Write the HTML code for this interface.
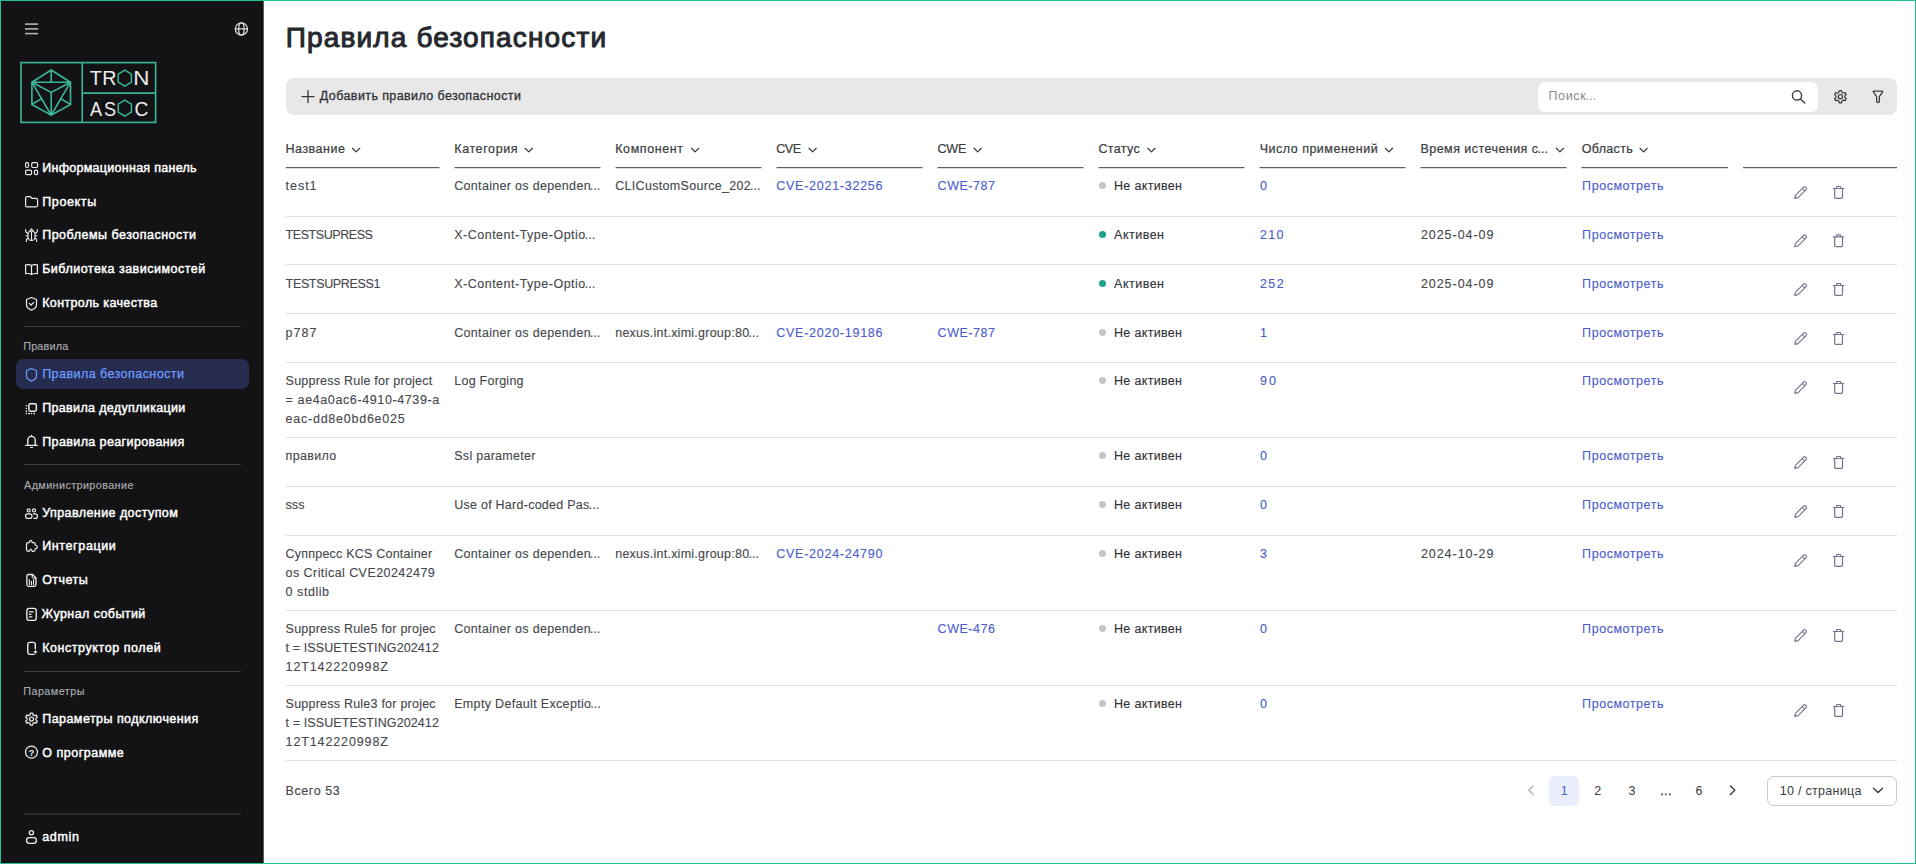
<!DOCTYPE html>
<html lang="ru"><head><meta charset="utf-8"><title>Правила безопасности</title>
<style>
html,body{margin:0;padding:0}
body{width:1916px;height:864px;position:relative;overflow:hidden;background:#fff;font-family:"Liberation Sans", sans-serif;}
.b{position:absolute}
.t{position:absolute;white-space:pre;line-height:40px;margin:0;padding:0}
#ov{position:absolute;left:0;top:0;width:1916px;height:864px;pointer-events:none}
#frame{position:absolute;left:0;top:0;width:1914px;height:862px;border:1px solid #1fc09a;pointer-events:none}
</style></head><body>
<div class="b" style="left:0;top:0;width:264px;height:864px;background:#131315"></div>
<div class="b" style="left:263px;top:1px;width:1px;height:862px;background:#5c5c5e"></div>
<div class="b" style="left:24px;top:326px;width:217px;height:1px;background:#3b3b3e"></div>
<div class="b" style="left:24px;top:464px;width:217px;height:1px;background:#3b3b3e"></div>
<div class="b" style="left:24px;top:671px;width:217px;height:1px;background:#3b3b3e"></div>
<div class="b" style="left:24px;top:813px;width:217px;height:2px;background:#2b2b2e"></div>
<div class="b" style="left:16px;top:359px;width:233px;height:30px;border-radius:7px;background:#262c4f"></div>
<div class="b" style="left:286px;top:78px;width:1611px;height:37px;border-radius:8px;background:#e8e8e8"></div>
<div class="b" style="left:1538px;top:82px;width:280px;height:30px;border-radius:7px;background:#fff"></div>
<div class="b" style="left:286px;top:216px;width:1611px;height:1px;background:#e0e0e1"></div>
<div class="b" style="left:286px;top:264px;width:1611px;height:1px;background:#e0e0e1"></div>
<div class="b" style="left:286px;top:313px;width:1611px;height:1px;background:#e0e0e1"></div>
<div class="b" style="left:286px;top:362px;width:1611px;height:1px;background:#e0e0e1"></div>
<div class="b" style="left:286px;top:437px;width:1611px;height:1px;background:#e0e0e1"></div>
<div class="b" style="left:286px;top:486px;width:1611px;height:1px;background:#e0e0e1"></div>
<div class="b" style="left:286px;top:535px;width:1611px;height:1px;background:#e0e0e1"></div>
<div class="b" style="left:286px;top:610px;width:1611px;height:1px;background:#e0e0e1"></div>
<div class="b" style="left:286px;top:685px;width:1611px;height:1px;background:#e0e0e1"></div>
<div class="b" style="left:286px;top:760px;width:1611px;height:1px;background:#e0e0e1"></div>
<div class="b" style="left:1098.9px;top:182.3px;width:7px;height:7px;border-radius:50%;background:#c4c5c8"></div>
<div class="b" style="left:1098.9px;top:231.3px;width:7px;height:7px;border-radius:50%;background:#1fa386"></div>
<div class="b" style="left:1098.9px;top:280.0px;width:7px;height:7px;border-radius:50%;background:#1fa386"></div>
<div class="b" style="left:1098.9px;top:329.0px;width:7px;height:7px;border-radius:50%;background:#c4c5c8"></div>
<div class="b" style="left:1098.9px;top:377.3px;width:7px;height:7px;border-radius:50%;background:#c4c5c8"></div>
<div class="b" style="left:1098.9px;top:452.3px;width:7px;height:7px;border-radius:50%;background:#c4c5c8"></div>
<div class="b" style="left:1098.9px;top:501.3px;width:7px;height:7px;border-radius:50%;background:#c4c5c8"></div>
<div class="b" style="left:1098.9px;top:550.3px;width:7px;height:7px;border-radius:50%;background:#c4c5c8"></div>
<div class="b" style="left:1098.9px;top:625.3px;width:7px;height:7px;border-radius:50%;background:#c4c5c8"></div>
<div class="b" style="left:1098.9px;top:700.3px;width:7px;height:7px;border-radius:50%;background:#c4c5c8"></div>
<div class="b" style="left:1549px;top:776px;width:30px;height:30px;border-radius:6px;background:#e9eefc"></div>
<div class="b" style="left:1767px;top:776px;width:130px;height:30px;border-radius:7px;border:1px solid #c9cacc;box-sizing:border-box;background:#fff"></div>
<aside>
<span class="t" style="left:42.20px;top:148px;font-size:12.5px;color:#ffffff;-webkit-text-stroke:0.45px #ffffff;letter-spacing:0.285px;">Информационная панель</span>
<span class="t" style="left:42.20px;top:182px;font-size:12.5px;color:#ffffff;-webkit-text-stroke:0.45px #ffffff;letter-spacing:0.647px;">Проекты</span>
<span class="t" style="left:42.20px;top:215px;font-size:12.5px;color:#ffffff;-webkit-text-stroke:0.45px #ffffff;letter-spacing:0.497px;">Проблемы безопасности</span>
<span class="t" style="left:42.20px;top:249px;font-size:12.5px;color:#ffffff;-webkit-text-stroke:0.45px #ffffff;letter-spacing:0.484px;">Библиотека зависимостей</span>
<span class="t" style="left:42.20px;top:283px;font-size:12.5px;color:#ffffff;-webkit-text-stroke:0.45px #ffffff;letter-spacing:0.368px;">Контроль качества</span>
<span class="t" style="left:23.20px;top:326px;font-size:10.8px;color:#abacaf;-webkit-text-stroke:0.15px #abacaf;letter-spacing:0.197px;">Правила</span>
<span class="t" style="left:42.20px;top:354px;font-size:12.5px;color:#6f9dff;-webkit-text-stroke:0.25px #6f9dff;letter-spacing:0.447px;">Правила безопасности</span>
<span class="t" style="left:42.20px;top:388px;font-size:12.5px;color:#ffffff;-webkit-text-stroke:0.45px #ffffff;letter-spacing:0.344px;">Правила дедупликации</span>
<span class="t" style="left:42.20px;top:422px;font-size:12.5px;color:#ffffff;-webkit-text-stroke:0.45px #ffffff;letter-spacing:0.390px;">Правила реагирования</span>
<span class="t" style="left:24.05px;top:465px;font-size:10.8px;color:#abacaf;-webkit-text-stroke:0.15px #abacaf;letter-spacing:0.400px;">Администрирование</span>
<span class="t" style="left:42.20px;top:493px;font-size:12.5px;color:#ffffff;-webkit-text-stroke:0.45px #ffffff;letter-spacing:0.430px;">Управление доступом</span>
<span class="t" style="left:42.20px;top:526px;font-size:12.5px;color:#ffffff;-webkit-text-stroke:0.45px #ffffff;letter-spacing:0.626px;">Интеграции</span>
<span class="t" style="left:42.20px;top:560px;font-size:12.5px;color:#ffffff;-webkit-text-stroke:0.45px #ffffff;letter-spacing:0.447px;">Отчеты</span>
<span class="t" style="left:41.60px;top:594px;font-size:12.5px;color:#ffffff;-webkit-text-stroke:0.45px #ffffff;letter-spacing:0.422px;">Журнал событий</span>
<span class="t" style="left:42.20px;top:628px;font-size:12.5px;color:#ffffff;-webkit-text-stroke:0.45px #ffffff;letter-spacing:0.564px;">Конструктор полей</span>
<span class="t" style="left:23.20px;top:671px;font-size:10.8px;color:#abacaf;-webkit-text-stroke:0.15px #abacaf;letter-spacing:0.465px;">Параметры</span>
<span class="t" style="left:42.20px;top:699px;font-size:12.5px;color:#ffffff;-webkit-text-stroke:0.45px #ffffff;letter-spacing:0.459px;">Параметры подключения</span>
<span class="t" style="left:42.20px;top:733px;font-size:12.5px;color:#ffffff;-webkit-text-stroke:0.45px #ffffff;letter-spacing:0.516px;">О программе</span>
<span class="t" style="left:42.20px;top:817px;font-size:12.5px;color:#ffffff;-webkit-text-stroke:0.45px #ffffff;letter-spacing:0.685px;">admin</span>
</aside>
<main>
<h1 class="t" style="left:285.83px;top:18px;font-size:28px;color:#25282d;-webkit-text-stroke:1.0px #25282d;letter-spacing:1.144px;font-weight:400;">Правила безопасности</h1>
<span class="t" style="left:319.86px;top:76px;font-size:12.5px;color:#2f3136;-webkit-text-stroke:0.3px #2f3136;letter-spacing:0.399px;">Добавить правило безопасности</span>
<span class="t" style="left:1548.49px;top:76px;font-size:12.5px;color:#8a8b8e;letter-spacing:0.654px;">Поиск<span style="margin-left:-0.73px;letter-spacing:0.03px">...</span></span>
<span class="t" style="left:285.60px;top:129px;font-size:12.5px;color:#3a3c40;-webkit-text-stroke:0.22px #3a3c40;letter-spacing:0.484px;">Название</span>
<span class="t" style="left:454.25px;top:129px;font-size:12.5px;color:#3a3c40;-webkit-text-stroke:0.22px #3a3c40;letter-spacing:0.609px;">Категория</span>
<span class="t" style="left:615.25px;top:129px;font-size:12.5px;color:#3a3c40;-webkit-text-stroke:0.22px #3a3c40;letter-spacing:0.578px;">Компонент</span>
<span class="t" style="left:776.25px;top:129px;font-size:12.5px;color:#3a3c40;-webkit-text-stroke:0.22px #3a3c40;letter-spacing:-0.412px;">CVE</span>
<span class="t" style="left:937.60px;top:129px;font-size:12.5px;color:#3a3c40;-webkit-text-stroke:0.22px #3a3c40;letter-spacing:-0.268px;">CWE</span>
<span class="t" style="left:1098.40px;top:129px;font-size:12.5px;color:#3a3c40;-webkit-text-stroke:0.22px #3a3c40;letter-spacing:0.361px;">Статус</span>
<span class="t" style="left:1259.70px;top:129px;font-size:12.5px;color:#3a3c40;-webkit-text-stroke:0.22px #3a3c40;letter-spacing:0.504px;">Число применений</span>
<span class="t" style="left:1420.49px;top:129px;font-size:12.5px;color:#3a3c40;-webkit-text-stroke:0.22px #3a3c40;letter-spacing:0.454px;">Время истечения с<span style="margin-left:-0.93px;letter-spacing:0.03px">...</span></span>
<span class="t" style="left:1581.80px;top:129px;font-size:12.5px;color:#3a3c40;-webkit-text-stroke:0.22px #3a3c40;letter-spacing:0.308px;">Область</span>
<span class="t" style="left:285.60px;top:166px;font-size:12.5px;color:#45474c;-webkit-text-stroke:0.12px #45474c;letter-spacing:0.963px;">test1</span>
<span class="t" style="left:454.19px;top:166px;font-size:12.5px;color:#45474c;-webkit-text-stroke:0.12px #45474c;letter-spacing:0.323px;">Container os dependen<span style="margin-left:-1.28px;letter-spacing:0.03px">...</span></span>
<span class="t" style="left:615.19px;top:166px;font-size:12.5px;color:#45474c;-webkit-text-stroke:0.12px #45474c;letter-spacing:0.312px;">CLICustomSource_202<span style="margin-left:-1.08px;letter-spacing:0.03px">...</span></span>
<span class="t" style="left:776.25px;top:166px;font-size:12.5px;color:#4b5ccf;-webkit-text-stroke:0.12px #4b5ccf;letter-spacing:0.742px;">CVE-2021-32256</span>
<span class="t" style="left:937.60px;top:166px;font-size:12.5px;color:#4b5ccf;-webkit-text-stroke:0.12px #4b5ccf;letter-spacing:0.515px;">CWE-787</span>
<span class="t" style="left:1114.00px;top:166px;font-size:12.5px;color:#2f3136;-webkit-text-stroke:0.12px #2f3136;letter-spacing:0.326px;">Не активен</span>
<span class="t" style="left:1260.00px;top:166px;font-size:12.5px;color:#4b5ccf;-webkit-text-stroke:0.12px #4b5ccf;">0</span>
<span class="t" style="left:1582.10px;top:166px;font-size:12.5px;color:#4b5ccf;-webkit-text-stroke:0.12px #4b5ccf;letter-spacing:0.549px;">Просмотреть</span>
<span class="t" style="left:285.60px;top:215px;font-size:12.5px;color:#45474c;-webkit-text-stroke:0.12px #45474c;letter-spacing:-0.437px;">TESTSUPRESS</span>
<span class="t" style="left:454.19px;top:215px;font-size:12.5px;color:#45474c;-webkit-text-stroke:0.12px #45474c;letter-spacing:0.503px;">X-Content-Type-Optio<span style="margin-left:-1.17px;letter-spacing:0.03px">...</span></span>
<span class="t" style="left:1114.10px;top:215px;font-size:12.5px;color:#2f3136;-webkit-text-stroke:0.12px #2f3136;letter-spacing:0.483px;">Активен</span>
<span class="t" style="left:1260.00px;top:215px;font-size:12.5px;color:#4b5ccf;-webkit-text-stroke:0.12px #4b5ccf;letter-spacing:1.336px;">210</span>
<span class="t" style="left:1420.90px;top:215px;font-size:12.5px;color:#45474c;-webkit-text-stroke:0.12px #45474c;letter-spacing:0.955px;">2025-04-09</span>
<span class="t" style="left:1582.10px;top:215px;font-size:12.5px;color:#4b5ccf;-webkit-text-stroke:0.12px #4b5ccf;letter-spacing:0.549px;">Просмотреть</span>
<span class="t" style="left:285.60px;top:264px;font-size:12.5px;color:#45474c;-webkit-text-stroke:0.12px #45474c;letter-spacing:-0.344px;">TESTSUPRESS1</span>
<span class="t" style="left:454.19px;top:264px;font-size:12.5px;color:#45474c;-webkit-text-stroke:0.12px #45474c;letter-spacing:0.503px;">X-Content-Type-Optio<span style="margin-left:-1.17px;letter-spacing:0.03px">...</span></span>
<span class="t" style="left:1114.10px;top:264px;font-size:12.5px;color:#2f3136;-webkit-text-stroke:0.12px #2f3136;letter-spacing:0.483px;">Активен</span>
<span class="t" style="left:1260.00px;top:264px;font-size:12.5px;color:#4b5ccf;-webkit-text-stroke:0.12px #4b5ccf;letter-spacing:1.406px;">252</span>
<span class="t" style="left:1420.90px;top:264px;font-size:12.5px;color:#45474c;-webkit-text-stroke:0.12px #45474c;letter-spacing:0.955px;">2025-04-09</span>
<span class="t" style="left:1582.10px;top:264px;font-size:12.5px;color:#4b5ccf;-webkit-text-stroke:0.12px #4b5ccf;letter-spacing:0.549px;">Просмотреть</span>
<span class="t" style="left:285.60px;top:313px;font-size:12.5px;color:#45474c;-webkit-text-stroke:0.12px #45474c;letter-spacing:1.054px;">p787</span>
<span class="t" style="left:454.19px;top:313px;font-size:12.5px;color:#45474c;-webkit-text-stroke:0.12px #45474c;letter-spacing:0.323px;">Container os dependen<span style="margin-left:-1.28px;letter-spacing:0.03px">...</span></span>
<span class="t" style="left:615.19px;top:313px;font-size:12.5px;color:#45474c;-webkit-text-stroke:0.12px #45474c;letter-spacing:0.244px;">nexus.int.ximi.group:80<span style="margin-left:-0.87px;letter-spacing:0.03px">...</span></span>
<span class="t" style="left:776.25px;top:313px;font-size:12.5px;color:#4b5ccf;-webkit-text-stroke:0.12px #4b5ccf;letter-spacing:0.742px;">CVE-2020-19186</span>
<span class="t" style="left:937.60px;top:313px;font-size:12.5px;color:#4b5ccf;-webkit-text-stroke:0.12px #4b5ccf;letter-spacing:0.515px;">CWE-787</span>
<span class="t" style="left:1114.00px;top:313px;font-size:12.5px;color:#2f3136;-webkit-text-stroke:0.12px #2f3136;letter-spacing:0.326px;">Не активен</span>
<span class="t" style="left:1260.00px;top:313px;font-size:12.5px;color:#4b5ccf;-webkit-text-stroke:0.12px #4b5ccf;">1</span>
<span class="t" style="left:1582.10px;top:313px;font-size:12.5px;color:#4b5ccf;-webkit-text-stroke:0.12px #4b5ccf;letter-spacing:0.549px;">Просмотреть</span>
<span class="t" style="left:285.60px;top:361px;font-size:12.5px;color:#45474c;-webkit-text-stroke:0.12px #45474c;letter-spacing:0.233px;">Suppress Rule for project</span>
<span class="t" style="left:285.60px;top:380px;font-size:12.5px;color:#45474c;-webkit-text-stroke:0.12px #45474c;letter-spacing:0.614px;">= ae4a0ac6-4910-4739-a</span>
<span class="t" style="left:285.60px;top:399px;font-size:12.5px;color:#45474c;-webkit-text-stroke:0.12px #45474c;letter-spacing:0.755px;">eac-dd8e0bd6e025</span>
<span class="t" style="left:454.25px;top:361px;font-size:12.5px;color:#45474c;-webkit-text-stroke:0.12px #45474c;letter-spacing:0.258px;">Log Forging</span>
<span class="t" style="left:1114.00px;top:361px;font-size:12.5px;color:#2f3136;-webkit-text-stroke:0.12px #2f3136;letter-spacing:0.326px;">Не активен</span>
<span class="t" style="left:1260.00px;top:361px;font-size:12.5px;color:#4b5ccf;-webkit-text-stroke:0.12px #4b5ccf;letter-spacing:2.024px;">90</span>
<span class="t" style="left:1582.10px;top:361px;font-size:12.5px;color:#4b5ccf;-webkit-text-stroke:0.12px #4b5ccf;letter-spacing:0.549px;">Просмотреть</span>
<span class="t" style="left:285.60px;top:436px;font-size:12.5px;color:#45474c;-webkit-text-stroke:0.12px #45474c;letter-spacing:0.331px;">правило</span>
<span class="t" style="left:454.25px;top:436px;font-size:12.5px;color:#45474c;-webkit-text-stroke:0.12px #45474c;letter-spacing:0.274px;">Ssl parameter</span>
<span class="t" style="left:1114.00px;top:436px;font-size:12.5px;color:#2f3136;-webkit-text-stroke:0.12px #2f3136;letter-spacing:0.326px;">Не активен</span>
<span class="t" style="left:1260.00px;top:436px;font-size:12.5px;color:#4b5ccf;-webkit-text-stroke:0.12px #4b5ccf;">0</span>
<span class="t" style="left:1582.10px;top:436px;font-size:12.5px;color:#4b5ccf;-webkit-text-stroke:0.12px #4b5ccf;letter-spacing:0.549px;">Просмотреть</span>
<span class="t" style="left:285.60px;top:485px;font-size:12.5px;color:#45474c;-webkit-text-stroke:0.12px #45474c;letter-spacing:0.021px;">sss</span>
<span class="t" style="left:454.19px;top:485px;font-size:12.5px;color:#45474c;-webkit-text-stroke:0.12px #45474c;letter-spacing:0.257px;">Use of Hard-coded Pas<span style="margin-left:-0.85px;letter-spacing:0.03px">...</span></span>
<span class="t" style="left:1114.00px;top:485px;font-size:12.5px;color:#2f3136;-webkit-text-stroke:0.12px #2f3136;letter-spacing:0.326px;">Не активен</span>
<span class="t" style="left:1260.00px;top:485px;font-size:12.5px;color:#4b5ccf;-webkit-text-stroke:0.12px #4b5ccf;">0</span>
<span class="t" style="left:1582.10px;top:485px;font-size:12.5px;color:#4b5ccf;-webkit-text-stroke:0.12px #4b5ccf;letter-spacing:0.549px;">Просмотреть</span>
<span class="t" style="left:285.60px;top:534px;font-size:12.5px;color:#45474c;-webkit-text-stroke:0.12px #45474c;letter-spacing:0.213px;">Суппресс KCS Container</span>
<span class="t" style="left:285.60px;top:553px;font-size:12.5px;color:#45474c;-webkit-text-stroke:0.12px #45474c;letter-spacing:0.435px;">os Critical CVE20242479</span>
<span class="t" style="left:285.60px;top:572px;font-size:12.5px;color:#45474c;-webkit-text-stroke:0.12px #45474c;letter-spacing:0.537px;">0 stdlib</span>
<span class="t" style="left:454.19px;top:534px;font-size:12.5px;color:#45474c;-webkit-text-stroke:0.12px #45474c;letter-spacing:0.323px;">Container os dependen<span style="margin-left:-1.28px;letter-spacing:0.03px">...</span></span>
<span class="t" style="left:615.19px;top:534px;font-size:12.5px;color:#45474c;-webkit-text-stroke:0.12px #45474c;letter-spacing:0.244px;">nexus.int.ximi.group:80<span style="margin-left:-0.87px;letter-spacing:0.03px">...</span></span>
<span class="t" style="left:776.25px;top:534px;font-size:12.5px;color:#4b5ccf;-webkit-text-stroke:0.12px #4b5ccf;letter-spacing:0.737px;">CVE-2024-24790</span>
<span class="t" style="left:1114.00px;top:534px;font-size:12.5px;color:#2f3136;-webkit-text-stroke:0.12px #2f3136;letter-spacing:0.326px;">Не активен</span>
<span class="t" style="left:1260.00px;top:534px;font-size:12.5px;color:#4b5ccf;-webkit-text-stroke:0.12px #4b5ccf;">3</span>
<span class="t" style="left:1420.90px;top:534px;font-size:12.5px;color:#45474c;-webkit-text-stroke:0.12px #45474c;letter-spacing:0.955px;">2024-10-29</span>
<span class="t" style="left:1582.10px;top:534px;font-size:12.5px;color:#4b5ccf;-webkit-text-stroke:0.12px #4b5ccf;letter-spacing:0.549px;">Просмотреть</span>
<span class="t" style="left:285.60px;top:609px;font-size:12.5px;color:#45474c;-webkit-text-stroke:0.12px #45474c;letter-spacing:0.227px;">Suppress Rule5 for projec</span>
<span class="t" style="left:285.60px;top:628px;font-size:12.5px;color:#45474c;-webkit-text-stroke:0.12px #45474c;letter-spacing:0.103px;">t = ISSUETESTING202412</span>
<span class="t" style="left:285.60px;top:647px;font-size:12.5px;color:#45474c;-webkit-text-stroke:0.12px #45474c;letter-spacing:0.882px;">12T142220998Z</span>
<span class="t" style="left:454.19px;top:609px;font-size:12.5px;color:#45474c;-webkit-text-stroke:0.12px #45474c;letter-spacing:0.323px;">Container os dependen<span style="margin-left:-1.28px;letter-spacing:0.03px">...</span></span>
<span class="t" style="left:937.60px;top:609px;font-size:12.5px;color:#4b5ccf;-webkit-text-stroke:0.12px #4b5ccf;letter-spacing:0.535px;">CWE-476</span>
<span class="t" style="left:1114.00px;top:609px;font-size:12.5px;color:#2f3136;-webkit-text-stroke:0.12px #2f3136;letter-spacing:0.326px;">Не активен</span>
<span class="t" style="left:1260.00px;top:609px;font-size:12.5px;color:#4b5ccf;-webkit-text-stroke:0.12px #4b5ccf;">0</span>
<span class="t" style="left:1582.10px;top:609px;font-size:12.5px;color:#4b5ccf;-webkit-text-stroke:0.12px #4b5ccf;letter-spacing:0.549px;">Просмотреть</span>
<span class="t" style="left:285.60px;top:684px;font-size:12.5px;color:#45474c;-webkit-text-stroke:0.12px #45474c;letter-spacing:0.227px;">Suppress Rule3 for projec</span>
<span class="t" style="left:285.60px;top:703px;font-size:12.5px;color:#45474c;-webkit-text-stroke:0.12px #45474c;letter-spacing:0.103px;">t = ISSUETESTING202412</span>
<span class="t" style="left:285.60px;top:722px;font-size:12.5px;color:#45474c;-webkit-text-stroke:0.12px #45474c;letter-spacing:0.882px;">12T142220998Z</span>
<span class="t" style="left:454.19px;top:684px;font-size:12.5px;color:#45474c;-webkit-text-stroke:0.12px #45474c;letter-spacing:0.329px;">Empty Default Exceptio<span style="margin-left:-1.00px;letter-spacing:0.03px">...</span></span>
<span class="t" style="left:1114.00px;top:684px;font-size:12.5px;color:#2f3136;-webkit-text-stroke:0.12px #2f3136;letter-spacing:0.326px;">Не активен</span>
<span class="t" style="left:1260.00px;top:684px;font-size:12.5px;color:#4b5ccf;-webkit-text-stroke:0.12px #4b5ccf;">0</span>
<span class="t" style="left:1582.10px;top:684px;font-size:12.5px;color:#4b5ccf;-webkit-text-stroke:0.12px #4b5ccf;letter-spacing:0.549px;">Просмотреть</span>
<span class="t" style="left:285.60px;top:771px;font-size:12.5px;color:#45474c;-webkit-text-stroke:0.12px #45474c;letter-spacing:0.577px;">Всего 53</span>
<span class="t" style="left:1560.75px;top:771px;font-size:12.5px;color:#4b5ccf;">1</span>
<span class="t" style="left:1594.27px;top:771px;font-size:12.5px;color:#3a3c40;">2</span>
<span class="t" style="left:1628.52px;top:771px;font-size:12.5px;color:#3a3c40;">3</span>
<span class="t" style="left:1660.21px;top:771px;font-size:12.5px;color:#3a3c40;-webkit-text-stroke:0.3px #3a3c40;letter-spacing:0.382px;">...</span>
<span class="t" style="left:1695.57px;top:771px;font-size:12.5px;color:#3a3c40;">6</span>
<span class="t" style="left:1779.65px;top:771px;font-size:12.5px;color:#3a3c40;letter-spacing:0.304px;">10 / страница</span>
</main>
<svg id="ov" viewBox="0 0 1916 864" width="1916" height="864"><g fill="none" stroke="#dcdcde" stroke-width="1.25" stroke-linecap="round" stroke-linejoin="round" ><circle cx="241.4" cy="28.9" r="6.1"/><ellipse cx="241.4" cy="28.9" rx="2.7" ry="6.1"/><path d="M235.3 28.9h12.2"/></g><g fill="none" stroke="#3bb597" stroke-width="1.65" stroke-linejoin="miter"><rect x="21" y="62.6" width="134.6" height="59.8"/><path d="M82.2 62.6v59.8M82.2 93.1h73.4"/><path d="M51.2 70L70.5 82.2L70.5 104.4L51.2 115.1L31.9 104.4L31.9 82.2ZM31.9 82.2L70.5 82.2M51.2 70V82.2M31.9 82.2L51.2 92.4L70.5 82.2M51.2 92.4L51.2 115.1M31.9 82.2L51.2 115.1L70.5 82.2M31.9 104.4L41.5 98.7M70.5 104.4L60.9 98.7"/><path d="M124.8 70.2L131.4 74.2L131.4 82.2L124.8 86.2L118.2 82.2L118.2 74.2ZM124.8 100.2L131.4 104.2L131.4 112.2L124.8 116.2L118.2 112.2L118.2 104.2Z" stroke-width="1.5"/></g><g fill="#ededed" font-family="Liberation Sans, sans-serif" font-size="20.2"><text x="89.76" y="85.2" textLength="12.10" lengthAdjust="spacingAndGlyphs">T</text><text x="102.18" y="85.2" textLength="14.23" lengthAdjust="spacingAndGlyphs">R</text><text x="133.26" y="85.2" textLength="16.16" lengthAdjust="spacingAndGlyphs">N</text><text x="89.96" y="115.5" textLength="12.07" lengthAdjust="spacingAndGlyphs">A</text><text x="103.88" y="115.7" textLength="12.05" lengthAdjust="spacingAndGlyphs">S</text><text x="134.42" y="115.7" textLength="13.91" lengthAdjust="spacingAndGlyphs">C</text></g><g fill="none" stroke="#ececee" stroke-width="1.2" stroke-linecap="round" stroke-linejoin="round" ><rect x="25.60" y="162.60" width="2.90" height="4.90" rx="1.2"/><rect x="31.70" y="162.60" width="5.90" height="4.90" rx="1.2"/><rect x="25.60" y="170.20" width="6.00" height="4.50" rx="1.2"/><rect x="34.50" y="170.20" width="3.10" height="4.50" rx="1.2"/></g><g fill="none" stroke="#ececee" stroke-width="1.2" stroke-linecap="round" stroke-linejoin="round" ><path d="M25.6 198.2a1.6 1.6 0 0 1 1.6-1.6h2.6c.6 0 1 .2 1.4.7l.8 1.1h4.0a1.6 1.6 0 0 1 1.6 1.6v5.2a1.6 1.6 0 0 1-1.6 1.6h-8.8a1.6 1.6 0 0 1-1.6-1.6z"/></g><g fill="none" stroke="#ececee" stroke-width="1.1" stroke-linecap="round" stroke-linejoin="round" ><path d="M27.9 234.6a3.6 3.6 0 0 1 7.2 0v2.3a3.6 3.6 0 0 1-7.2 0z"/><path d="M31.5 231.7v8.4"/><path d="M29.3 231.6l2.2-2.8 2.2 2.8"/><path d="M27.9 233.5l-2.2-1.7v-2.3M35.1 233.5l2.2-1.7v-2.3M27.9 235.7h-1.8M35.1 235.7h1.8M28.2 238.2l-1.8 1v2.3M34.8 238.2l1.8 1v2.3"/></g><g fill="none" stroke="#ececee" stroke-width="1.2" stroke-linecap="round" stroke-linejoin="round" ><path d="M25.6 264.9c2.4-.5 4.3-.4 5.9.5c1.6-.9 3.5-1 5.9-.5v8.8c-2.4-.4-4.3-.2-5.9.8c-1.6-1-3.5-1.2-5.9-.8zM31.5 265.4v9"/></g><g fill="none" stroke="#ececee" stroke-width="1.2" stroke-linecap="round" stroke-linejoin="round" ><path d="M31.50 297.50l5.00 2.02v5.04c0 3.02 -2.20 4.66 -5.00 5.54c-2.80 -0.88 -5.00 -2.52 -5.00 -5.54v-5.04z"/><path d="M29.3 303.4l1.8 1.6 2.7-2.7"/></g><g fill="none" stroke="#6f9dff" stroke-width="1.2" stroke-linecap="round" stroke-linejoin="round" ><path d="M31.50 368.50l5.00 2.02v5.04c0 3.02 -2.20 4.66 -5.00 5.54c-2.80 -0.88 -5.00 -2.52 -5.00 -5.54v-5.04z"/></g><g fill="none" stroke="#ececee" stroke-width="1.5" stroke-linecap="round" stroke-linejoin="round" ><rect x="28.85" y="403.65" width="7.50" height="7.50" rx="1.6"/></g><g fill="#ececee"><rect x="25.8" y="405.0" width="1.2" height="1.4"/><rect x="25.8" y="407.9" width="1.2" height="1.2"/><rect x="25.8" y="410.4" width="1.2" height="1.7"/><rect x="25.8" y="413.0" width="1.2" height="1.2"/><rect x="28.2" y="413.0" width="1.8" height="1.2"/><rect x="30.9" y="413.0" width="1.2" height="1.2"/><rect x="33.2" y="413.0" width="1.8" height="1.2"/></g><g fill="none" stroke="#ececee" stroke-width="1.4" stroke-linecap="round" stroke-linejoin="round" ><path d="M27.8 445.3v-5.2a3.7 3.7 0 0 1 7.4 0v5.2"/><path d="M25.7 445.4h11.6" stroke-width="1.25"/><path d="M31.5 436.3v-.9M30.5 447.5h2.0" stroke-width="1.1"/></g><g fill="none" stroke="#ececee" stroke-width="1.2" stroke-linecap="round" stroke-linejoin="round" ><circle cx="28.7" cy="510.4" r="1.55"/><circle cx="34.0" cy="510.4" r="1.55"/><rect x="25.50" y="513.90" width="6.50" height="4.50" rx="2.2"/><path d="M33.5 513.9h1.7a2.25 2.25 0 0 1 0 4.5h-1.2"/></g><g fill="none" stroke="#ececee" stroke-width="1.25" stroke-linecap="round" stroke-linejoin="round" ><path d="M28.3 551.3q-1.8 0-1.8-1.8v-5.2q0-1.8 1.8-1.8h.9q.5-2.1 1.5-2.1t1.5 2.1h1.2q1.8 0 1.8 1.8v.7q2.2.6 2.2 1.9t-2.2 1.9v.7q0 1.8-1.8 1.8h-1.2q-.5-1.9-1.5-1.9t-1.5 1.9z"/></g><g fill="none" stroke="#ececee" stroke-width="1.3" stroke-linecap="round" stroke-linejoin="round" ><path d="M28.6 574.5h4.0l3.4 3.4v6.7a1.7 1.7 0 0 1-1.7 1.7h-5.7a1.7 1.7 0 0 1-1.7-1.7v-8.4a1.7 1.7 0 0 1 1.7-1.7z"/><path d="M29.4 584.6v-4.8M31.5 584.6v-3.2M33.6 584.6v-4.8" stroke-width="1.15"/></g><path d="M32.2 574.6l3.7 3.7h-2.6a1.1 1.1 0 0 1-1.1-1.1z" fill="none" stroke="#ececee" stroke-width="1"/><g fill="none" stroke="#ececee" stroke-width="1.35" stroke-linecap="round" stroke-linejoin="round" ><rect x="26.85" y="608.35" width="9.40" height="12.00" rx="2.3"/><path d="M28.9 611.8h4.7M28.9 614.4h2.5M28.9 616.8h3.4" stroke-width="1.25" stroke-linecap="butt"/></g><g fill="none" stroke="#ececee" stroke-width="1.4" stroke-linecap="round" stroke-linejoin="round" ><path d="M35.3 648.7v-4.2a2.1 2.1 0 0 0-2.1-2.1h-3.3a2.1 2.1 0 0 0-2.1 2.1v7.8a2.1 2.1 0 0 0 2.1 2.1h4.2"/></g><path d="M35.4 649.5l.75 1.65 1.65.75-1.65.75-.75 1.65-.75-1.65-1.65-.75 1.65-.75z" fill="#ececee"/><g fill="none" stroke="#ececee" stroke-width="1.25" stroke-linecap="round" stroke-linejoin="round" ><path d="M29.98 714.87L30.40 713.00L32.60 713.00L33.02 714.87L34.40 715.66L36.24 715.10L37.33 717.00L35.93 718.30L35.93 719.90L37.33 721.20L36.24 723.10L34.40 722.54L33.02 723.33L32.60 725.20L30.40 725.20L29.98 723.33L28.60 722.54L26.76 723.10L25.67 721.20L27.07 719.90L27.07 718.30L25.67 717.00L26.76 715.10L28.60 715.66Z"/><circle cx="31.5" cy="719.1" r="2.0"/></g><g fill="none" stroke="#ececee" stroke-width="1.2" stroke-linecap="round" stroke-linejoin="round" ><circle cx="31.5" cy="752.1" r="6.0"/></g><text x="31.5" y="755.9" text-anchor="middle" font-family="Liberation Sans, sans-serif" font-weight="700" font-size="9.2" fill="#ececee">?</text><g fill="none" stroke="#ececee" stroke-width="1.3" stroke-linecap="round" stroke-linejoin="round" ><circle cx="31.4" cy="832.7" r="2.1"/><rect x="26.50" y="837.60" width="9.90" height="5.70" rx="2.8"/></g><g fill="none" stroke="#34363b" stroke-width="1.3" stroke-linecap="round" stroke-linejoin="round" stroke-linecap="butt"><path d="M302 96.6h12M308 90.6v12"/></g><g fill="none" stroke="#3a3c40" stroke-width="1.4" stroke-linecap="round" stroke-linejoin="round" ><circle cx="1797" cy="95.4" r="4.6"/><path d="M1800.4 98.9l4.4 4.2"/></g><g fill="none" stroke="#3a3c40" stroke-width="1.25" stroke-linecap="round" stroke-linejoin="round" ><path d="M1838.88 92.47L1839.30 90.60L1841.50 90.60L1841.92 92.47L1843.30 93.26L1845.14 92.70L1846.23 94.60L1844.83 95.90L1844.83 97.50L1846.23 98.80L1845.14 100.70L1843.30 100.14L1841.92 100.93L1841.50 102.80L1839.30 102.80L1838.88 100.93L1837.50 100.14L1835.66 100.70L1834.57 98.80L1835.97 97.50L1835.97 95.90L1834.57 94.60L1835.66 92.70L1837.50 93.26Z"/><circle cx="1840.4" cy="96.7" r="2.1"/></g><g fill="none" stroke="#3a3c40" stroke-width="1.3" stroke-linecap="round" stroke-linejoin="round" ><path d="M1873.2 91.2h8.8a.6.6 0 0 1 .5 1l-3.15 4.5v4.6a1.35 1.35 0 0 1-2.7 0v-4.6l-3.15-4.5a.6.6 0 0 1 .5-1z"/></g><g fill="none" stroke="#74768a" stroke-width="1.15" stroke-linecap="round" stroke-linejoin="round" ><path d="M1794.7 198.4l.9-3.3 8.0-8.0a1.35 1.35 0 0 1 1.9 0l.6.6a1.35 1.35 0 0 1 0 1.9l-8.0 8.0zM1802.3 188.4l2.4 2.4"/><path d="M1794.7 246.7l.9-3.3 8.0-8.0a1.35 1.35 0 0 1 1.9 0l.6.6a1.35 1.35 0 0 1 0 1.9l-8.0 8.0zM1802.3 236.7l2.4 2.4"/><path d="M1794.7 295.4l.9-3.3 8.0-8.0a1.35 1.35 0 0 1 1.9 0l.6.6a1.35 1.35 0 0 1 0 1.9l-8.0 8.0zM1802.3 285.4l2.4 2.4"/><path d="M1794.7 344.4l.9-3.3 8.0-8.0a1.35 1.35 0 0 1 1.9 0l.6.6a1.35 1.35 0 0 1 0 1.9l-8.0 8.0zM1802.3 334.4l2.4 2.4"/><path d="M1794.7 393.4l.9-3.3 8.0-8.0a1.35 1.35 0 0 1 1.9 0l.6.6a1.35 1.35 0 0 1 0 1.9l-8.0 8.0zM1802.3 383.4l2.4 2.4"/><path d="M1794.7 468.4l.9-3.3 8.0-8.0a1.35 1.35 0 0 1 1.9 0l.6.6a1.35 1.35 0 0 1 0 1.9l-8.0 8.0zM1802.3 458.4l2.4 2.4"/><path d="M1794.7 517.4l.9-3.3 8.0-8.0a1.35 1.35 0 0 1 1.9 0l.6.6a1.35 1.35 0 0 1 0 1.9l-8.0 8.0zM1802.3 507.4l2.4 2.4"/><path d="M1794.7 566.4l.9-3.3 8.0-8.0a1.35 1.35 0 0 1 1.9 0l.6.6a1.35 1.35 0 0 1 0 1.9l-8.0 8.0zM1802.3 556.4l2.4 2.4"/><path d="M1794.7 641.4l.9-3.3 8.0-8.0a1.35 1.35 0 0 1 1.9 0l.6.6a1.35 1.35 0 0 1 0 1.9l-8.0 8.0zM1802.3 631.4l2.4 2.4"/><path d="M1794.7 716.4l.9-3.3 8.0-8.0a1.35 1.35 0 0 1 1.9 0l.6.6a1.35 1.35 0 0 1 0 1.9l-8.0 8.0zM1802.3 706.4l2.4 2.4"/></g><g fill="none" stroke="#74768a" stroke-width="1.2" stroke-linecap="round" stroke-linejoin="round" ><path d="M1833.4 188.5h10.4M1836.1 188.5l.8-2h3.4l.8 2M1834.7 188.5v8.8a1 1 0 0 0 1 1h5.8a1 1 0 0 0 1-1v-8.8"/><path d="M1833.4 236.8h10.4M1836.1 236.8l.8-2h3.4l.8 2M1834.7 236.8v8.8a1 1 0 0 0 1 1h5.8a1 1 0 0 0 1-1v-8.8"/><path d="M1833.4 285.5h10.4M1836.1 285.5l.8-2h3.4l.8 2M1834.7 285.5v8.8a1 1 0 0 0 1 1h5.8a1 1 0 0 0 1-1v-8.8"/><path d="M1833.4 334.5h10.4M1836.1 334.5l.8-2h3.4l.8 2M1834.7 334.5v8.8a1 1 0 0 0 1 1h5.8a1 1 0 0 0 1-1v-8.8"/><path d="M1833.4 383.5h10.4M1836.1 383.5l.8-2h3.4l.8 2M1834.7 383.5v8.8a1 1 0 0 0 1 1h5.8a1 1 0 0 0 1-1v-8.8"/><path d="M1833.4 458.5h10.4M1836.1 458.5l.8-2h3.4l.8 2M1834.7 458.5v8.8a1 1 0 0 0 1 1h5.8a1 1 0 0 0 1-1v-8.8"/><path d="M1833.4 507.5h10.4M1836.1 507.5l.8-2h3.4l.8 2M1834.7 507.5v8.8a1 1 0 0 0 1 1h5.8a1 1 0 0 0 1-1v-8.8"/><path d="M1833.4 556.5h10.4M1836.1 556.5l.8-2h3.4l.8 2M1834.7 556.5v8.8a1 1 0 0 0 1 1h5.8a1 1 0 0 0 1-1v-8.8"/><path d="M1833.4 631.5h10.4M1836.1 631.5l.8-2h3.4l.8 2M1834.7 631.5v8.8a1 1 0 0 0 1 1h5.8a1 1 0 0 0 1-1v-8.8"/><path d="M1833.4 706.5h10.4M1836.1 706.5l.8-2h3.4l.8 2M1834.7 706.5v8.8a1 1 0 0 0 1 1h5.8a1 1 0 0 0 1-1v-8.8"/></g><g fill="none" stroke="#b4b5b8" stroke-width="1.4" stroke-linecap="round" stroke-linejoin="round" ><path d="M1533.2 786l-4.4 4.3 4.4 4.3"/></g><g fill="none" stroke="#3a3c40" stroke-width="1.4" stroke-linecap="round" stroke-linejoin="round" ><path d="M1730.4 786l4.4 4.3-4.4 4.3"/></g><g fill="none" stroke="#3a3c40" stroke-width="1.4" stroke-linecap="round" stroke-linejoin="round" ><path d="M1873.4 788.2l4.6 4.4 4.6-4.4"/></g><rect x="285.80" y="167" width="153.70" height="1" fill="#5c5d61"/><rect x="285.80" y="168" width="153.70" height="1" fill="#dcdcdd"/><rect x="454.55" y="167" width="145.95" height="1" fill="#5c5d61"/><rect x="454.55" y="168" width="145.95" height="1" fill="#dcdcdd"/><rect x="615.55" y="167" width="145.95" height="1" fill="#5c5d61"/><rect x="615.55" y="168" width="145.95" height="1" fill="#dcdcdd"/><rect x="776.55" y="167" width="145.95" height="1" fill="#5c5d61"/><rect x="776.55" y="168" width="145.95" height="1" fill="#dcdcdd"/><rect x="937.55" y="167" width="145.95" height="1" fill="#5c5d61"/><rect x="937.55" y="168" width="145.95" height="1" fill="#dcdcdd"/><rect x="1098.55" y="167" width="145.95" height="1" fill="#5c5d61"/><rect x="1098.55" y="168" width="145.95" height="1" fill="#dcdcdd"/><rect x="1259.55" y="167" width="145.95" height="1" fill="#5c5d61"/><rect x="1259.55" y="168" width="145.95" height="1" fill="#dcdcdd"/><rect x="1420.55" y="167" width="145.95" height="1" fill="#5c5d61"/><rect x="1420.55" y="168" width="145.95" height="1" fill="#dcdcdd"/><rect x="1581.55" y="167" width="146.50" height="1" fill="#5c5d61"/><rect x="1581.55" y="168" width="146.50" height="1" fill="#dcdcdd"/><rect x="1743.10" y="167" width="154.00" height="1" fill="#5c5d61"/><rect x="1743.10" y="168" width="154.00" height="1" fill="#dcdcdd"/><rect x="25" y="23.3" width="13.1" height="1.6" fill="#b4b4b6"/><rect x="25" y="28.1" width="13.1" height="1.6" fill="#b4b4b6"/><rect x="25" y="32.8" width="13.1" height="1.6" fill="#b4b4b6"/><g fill="none" stroke="#3a3c40" stroke-width="1.25" stroke-linecap="round" stroke-linejoin="round"><path d="M352.5 148.3l3.6 3.6 3.6-3.6"/><path d="M525.2 148.3l3.6 3.6 3.6-3.6"/><path d="M691.5 148.3l3.6 3.6 3.6-3.6"/><path d="M809.0 148.3l3.6 3.6 3.6-3.6"/><path d="M974.1 148.3l3.6 3.6 3.6-3.6"/><path d="M1147.8 148.3l3.6 3.6 3.6-3.6"/><path d="M1385.3 148.3l3.6 3.6 3.6-3.6"/><path d="M1556.3 148.3l3.6 3.6 3.6-3.6"/><path d="M1640.0 148.3l3.6 3.6 3.6-3.6"/></g></svg>
<div id="frame"></div>
</body></html>
